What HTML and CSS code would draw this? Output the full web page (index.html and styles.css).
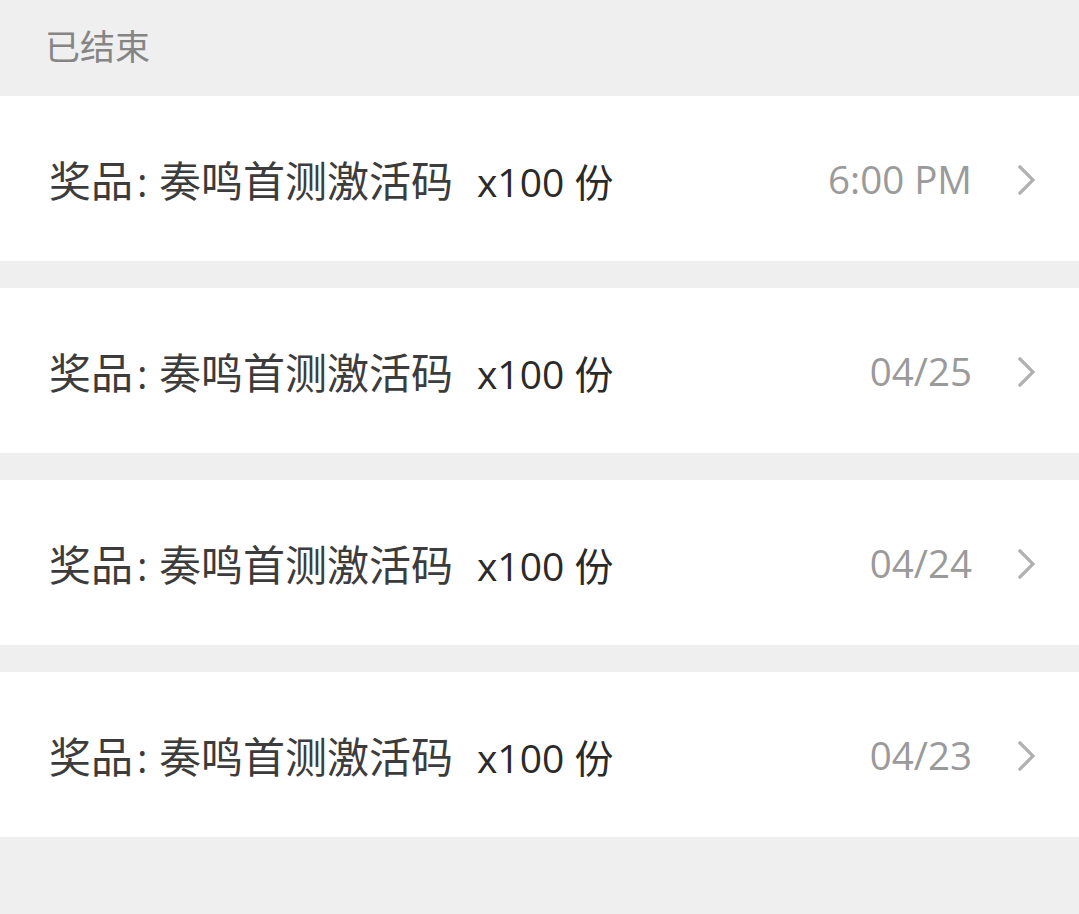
FILE: index.html
```html
<!DOCTYPE html>
<html lang="zh-CN">
<head>
<meta charset="utf-8">
<link rel="stylesheet" href="styles.css">
</head>
<body>
<div class="page">
  <div class="section-title">已结束</div>
  <div class="list">
    <div class="row">
      <div class="prize">奖品<span class="colon">: </span>奏鸣首测激活码<span class="qty">x100 份</span></div>
      <div class="date">6:00 PM</div>
      <svg class="chev" viewBox="0 0 20 32" width="20" height="32"><path d="M3 3 L16 16 L3 29" fill="none" stroke="#b0b0b0" stroke-width="3.2" stroke-linecap="square"/></svg>
    </div>
    <div class="row">
      <div class="prize">奖品<span class="colon">: </span>奏鸣首测激活码<span class="qty">x100 份</span></div>
      <div class="date">04/25</div>
      <svg class="chev" viewBox="0 0 20 32" width="20" height="32"><path d="M3 3 L16 16 L3 29" fill="none" stroke="#b0b0b0" stroke-width="3.2" stroke-linecap="square"/></svg>
    </div>
    <div class="row">
      <div class="prize">奖品<span class="colon">: </span>奏鸣首测激活码<span class="qty">x100 份</span></div>
      <div class="date">04/24</div>
      <svg class="chev" viewBox="0 0 20 32" width="20" height="32"><path d="M3 3 L16 16 L3 29" fill="none" stroke="#b0b0b0" stroke-width="3.2" stroke-linecap="square"/></svg>
    </div>
    <div class="row">
      <div class="prize">奖品<span class="colon">: </span>奏鸣首测激活码<span class="qty">x100 份</span></div>
      <div class="date">04/23</div>
      <svg class="chev" viewBox="0 0 20 32" width="20" height="32"><path d="M3 3 L16 16 L3 29" fill="none" stroke="#b0b0b0" stroke-width="3.2" stroke-linecap="square"/></svg>
    </div>
  </div>
</div>
</body>
</html>
```
FILE: styles.css
```css
html, body {
  margin: 0;
  padding: 0;
  background: #efefef;
}
.page {
  width: 1079px;
  height: 914px;
  background: #efefef;
  font-family: "Noto Sans", "Open Sans", "Noto Sans CJK SC", sans-serif;
}
.section-title {
  height: 96px;
  box-sizing: border-box;
  padding-left: 45px;
  padding-bottom: 8px;
  display: flex;
  align-items: center;
  font-size: 35px;
  color: #858585;
  font-family: "Noto Sans CJK SC", sans-serif;
}
.list {
  display: flex;
  flex-direction: column;
  gap: 27px;
}
.row {
  height: 165px;
  background: #fff;
  display: flex;
  align-items: center;
  padding: 0 42px 0 49px;
  box-sizing: border-box;
}
.prize {
  flex: 1;
  font-size: 42px;
  color: #3c3c3c;
  font-family: "Noto Sans CJK SC", sans-serif;
  white-space: pre;
}
.colon {
  font-family: "Open Sans", sans-serif;
  font-size: 40px;
  margin-left: 4px;
  margin-right: 1px;
}
.qty {
  margin-left: 24px;
  color: #2a2a2a;
  font-family: "Open Sans", "Noto Sans CJK SC", sans-serif;
  font-size: 39px;
}
.date {
  font-size: 38.5px;
  color: #9a9a9a;
  font-family: "Open Sans", sans-serif;
}
.chev {
  margin-left: 45px;
  margin-top: 2px;
}
```
